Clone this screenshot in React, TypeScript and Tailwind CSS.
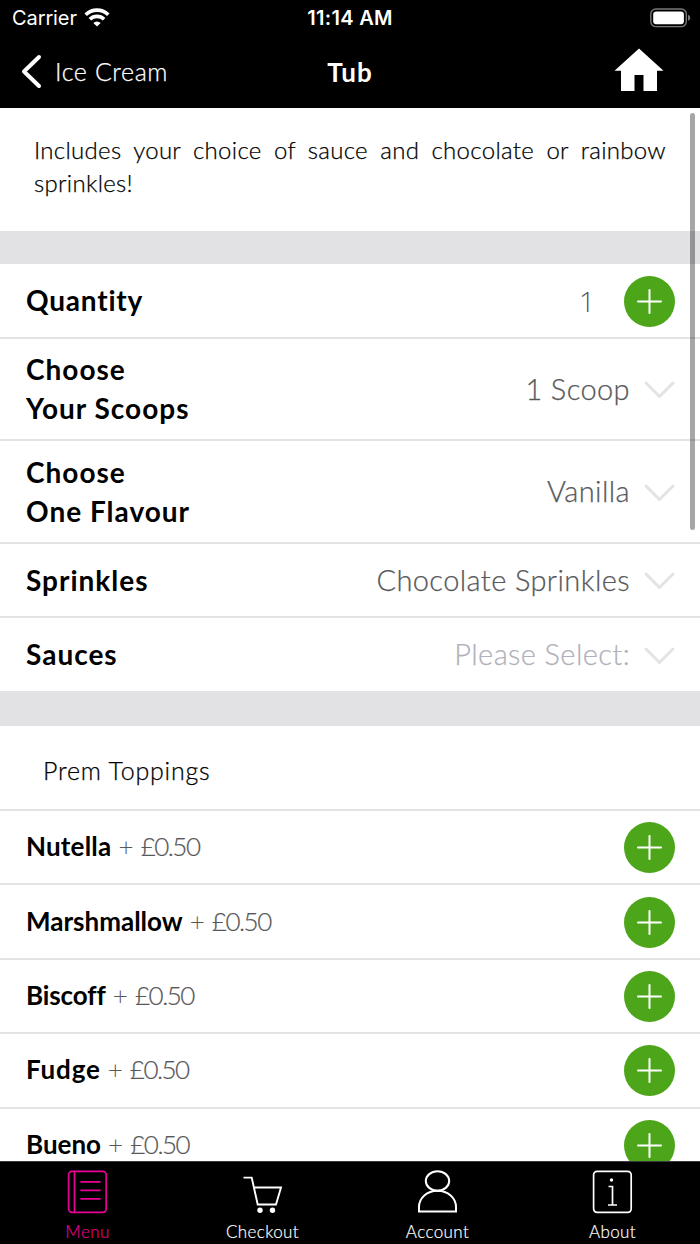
import { ReactNode } from 'react';

interface OptionRowProps {
    label: ReactNode;
    value: string;
    className: string;
    valueClassName?: string;
}

const toppings = [
    { name: 'Nutella', price: '£0.50', tracking: 'tracking-[0.2px]' },
    { name: 'Marshmallow', price: '£0.50', tracking: 'tracking-normal' },
    { name: 'Biscoff', price: '£0.50', tracking: 'tracking-[-0.1px]' },
    { name: 'Fudge', price: '£0.50', tracking: 'tracking-[0.8px]' },
    { name: 'Bueno', price: '£0.50', tracking: 'tracking-normal' },
];

const AddButton = () => (
    <button
        aria-label="Add"
        className="mt-px flex size-[51px] shrink-0 items-center justify-center rounded-full bg-[#4da61a]"
    >
        <svg width="25" height="25" viewBox="0 0 25 25" fill="none" stroke="white" strokeWidth="2" strokeLinecap="round">
            <path d="M12.5 1v23M1 12.5h23" />
        </svg>
    </button>
);

const OptionRow = ({ label, value, className, valueClassName = 'text-[#58585a]' }: OptionRowProps) => (
    <div className={`flex shrink-0 items-center justify-between border-[#e3e3e5] pr-[25px] pl-[26px] ${className}`}>
        <div className="text-[28px] leading-[39px] font-bold tracking-[1px]">{label}</div>
        <div className="flex items-center">
            <span className={`pb-px text-[29px] font-light tracking-[0.4px] [-webkit-text-stroke:0.25px] ${valueClassName}`}>
                {value}
            </span>
            <svg className="mt-[2px] ml-[14px]" width="31" height="18" viewBox="0 0 31 18" fill="none" stroke="#e3e3e5" strokeWidth="3" strokeLinecap="round" strokeLinejoin="round">
                <path d="M2 2 15.500 15.500 29 2" />
            </svg>
        </div>
    </div>
);

/** Carrier, clock and battery line on top of the screen. */
const StatusBar = () => (
    <div className="grid h-9 grid-cols-3 items-center px-[9px] font-['Inter',sans-serif] text-[20px]">
        <div className="flex items-center pl-[3px]">
            <span className="tracking-[-0.1px]">Carrier</span>
            <svg className="ml-[7px]" width="26" height="20" viewBox="0 0 26 20" fill="none" stroke="white" strokeWidth="3.600">
                <path d="M1.700 6.800a16 16 0 0 1 22.600 0" />
                <path d="M5.900 11.300a10 10 0 0 1 14.200 0" />
                <path d="M13 18.400 9.300 14.900a5.300 5.300 0 0 1 7.400 0Z" fill="white" stroke="none" />
            </svg>
        </div>
        <span className="text-center text-[20px] font-semibold tracking-[0.300px]">11:14 AM</span>
        <svg className="justify-self-end" width="41" height="20" viewBox="0 0 41 20">
            <rect x="0.800" y="1" width="35.500" height="17.600" rx="5" fill="none" stroke="#777" strokeWidth="1.400" />
            <rect x="3.200" y="3.400" width="30.700" height="12.800" rx="3" fill="white" />
            <path d="M38 6.800c3 1 3 5 0 6Z" fill="#777" />
        </svg>
    </div>
);

const NavBar = () => (
    <div className="grid h-[72px] grid-cols-3 items-center px-[21px]">
        <button className="flex items-center">
            <svg className="mb-[3px]" width="21" height="36" viewBox="0 0 21 36" fill="none" stroke="white" strokeWidth="4" strokeLinecap="round" strokeLinejoin="round">
                <path d="M18 4 3 18.500 18 33" />
            </svg>
            <span className="ml-[13px] text-[25px] font-light tracking-[0.6px] [-webkit-text-stroke:0.25px]">Ice Cream</span>
        </button>
        <h1 className="text-center text-[26px] font-bold tracking-[1px]">Tub</h1>
        <svg className="mr-[15px] mb-[4px] justify-self-end" width="50" height="44" viewBox="0 0 50 44" fill="white">
            <path d="M25 0.500 49.500 22.800H43V43H29.500V27H20.500V43H7V22.800H0.500Z" />
        </svg>
    </div>
);

const TabBar = () => (
    <nav className="grid h-[83px] shrink-0 grid-cols-4 border-t border-[#3a3a3a] bg-black pt-[6px] text-[17px] font-light tracking-[0.4px] text-white [-webkit-text-stroke:0.2px]">
        <div className="flex flex-col items-center text-[#e0008f]">
            <svg width="42" height="46" viewBox="0 0 42 46" fill="none" stroke="#ea0097" strokeWidth="1.700" strokeLinecap="round">
                <rect x="1.600" y="3.300" width="37.600" height="41" rx="3.500" />
                <path d="M7.500 3.300v41M14 13.800h19M14 22.300h19M14 30.800h19" />
            </svg>
            <span className="mt-[6px] leading-6">Menu</span>
        </div>
        <div className="flex flex-col items-center">
            <svg width="42" height="46" viewBox="0 0 42 46" fill="none" stroke="white" strokeWidth="1.900">
                <path d="M1.500 9.600H9.700L15.700 36.500H34L39 19.500H12" />
                <circle cx="18" cy="42.300" r="2.700" fill="white" stroke="none" />
                <circle cx="30.500" cy="42.300" r="2.700" fill="white" stroke="none" />
            </svg>
            <span className="mt-[6px] leading-6">Checkout</span>
        </div>
        <div className="flex flex-col items-center">
            <svg width="42" height="46" viewBox="0 0 42 46" fill="none" stroke="white" strokeWidth="2">
                <ellipse cx="20.500" cy="13" rx="11.700" ry="9.700" />
                <path d="M2 43.600V39C2 30 10 22.700 20.500 22.700S39 30 39 39v4.600Z" />
            </svg>
            <span className="mt-[6px] leading-6">Account</span>
        </div>
        <div className="flex flex-col items-center">
            <svg width="42" height="46" viewBox="0 0 42 46" fill="none" stroke="white" strokeWidth="1.700">
                <rect x="1.600" y="3.300" width="37.600" height="41" rx="3.500" />
                <circle cx="19.500" cy="12" r="1.700" fill="white" stroke="none" />
                <path d="M16.500 18.500h4V37M16 37h9" />
            </svg>
            <span className="mt-[6px] leading-6">About</span>
        </div>
    </nav>
);

export default function App() {
    return (
        <div className="flex h-[1244px] w-[700px] flex-col overflow-hidden bg-white font-['Lato',sans-serif] text-black">
            <header className="h-[108px] shrink-0 bg-black text-white">
                <StatusBar />
                <NavBar />
            </header>

            <main className="relative flex min-h-0 flex-1 flex-col overflow-hidden">
                <p className="h-[123px] shrink-0 px-[34px] pt-[26px] text-justify text-[24px] leading-[32.5px] font-light tracking-[0.3px] [-webkit-text-stroke:0.25px]">
                    Includes your choice of sauce and chocolate or rainbow sprinkles!
                </p>
                <div className="h-[33px] shrink-0 bg-[#e2e2e4]" />

                <div className="flex h-[75px] shrink-0 items-center border-b-2 border-[#e3e3e5] pr-[25px] pl-[26px]">
                    <div className="flex-1 pb-px text-[28px] font-bold tracking-[0.8px]">Quantity</div>
                    <span className="mr-[29px] font-['Open_Sans',sans-serif] text-[28px] font-light text-[#58585a]">1</span>
                    <AddButton />
                </div>
                <OptionRow
                    label={<>Choose<br />Your Scoops</>}
                    value="1 Scoop"
                    className="h-[102px] border-b-2"
                />
                <OptionRow
                    label={<>Choose<br />One Flavour</>}
                    value="Vanilla"
                    className="h-[103px] border-b-2"
                />
                <OptionRow label="Sprinkles" value="Chocolate Sprinkles" className="h-[74px] border-b-2" />
                <OptionRow
                    label="Sauces"
                    value="Please Select:"
                    className="h-[73px]"
                    valueClassName="text-[#b0b1ba]"
                />

                <div className="h-[35px] shrink-0 bg-[#e2e2e4]" />
                <h2 className="flex h-[85px] shrink-0 items-center border-b-2 border-[#e3e3e5] pt-[6px] pl-[43px] text-[25px] font-light tracking-[0.8px] [-webkit-text-stroke:0.25px]">
                    Prem Toppings
                </h2>
                {toppings.map((topping) => (
                    <div
                        key={topping.name}
                        className="flex h-[74.4px] shrink-0 items-center justify-between border-b-2 border-[#e3e3e5] pr-[25px] pl-[26px]"
                    >
                        <div className="pb-px text-[26px]">
                            <span className={`font-bold ${topping.tracking}`}>{topping.name}</span>
                            <span className="font-light text-[#58585a]"> + </span>
                            <span className="font-light tracking-[-1.5px] text-[#58585a] [-webkit-text-stroke:0.2px]">
                                {topping.price}
                            </span>
                        </div>
                        <AddButton />
                    </div>
                ))}

                {/* Scroll indicator */}
                <div className="absolute top-[5px] right-[5px] h-[417px] w-[5px] rounded-full bg-black/35" />
            </main>

            <TabBar />
        </div>
    );
}
